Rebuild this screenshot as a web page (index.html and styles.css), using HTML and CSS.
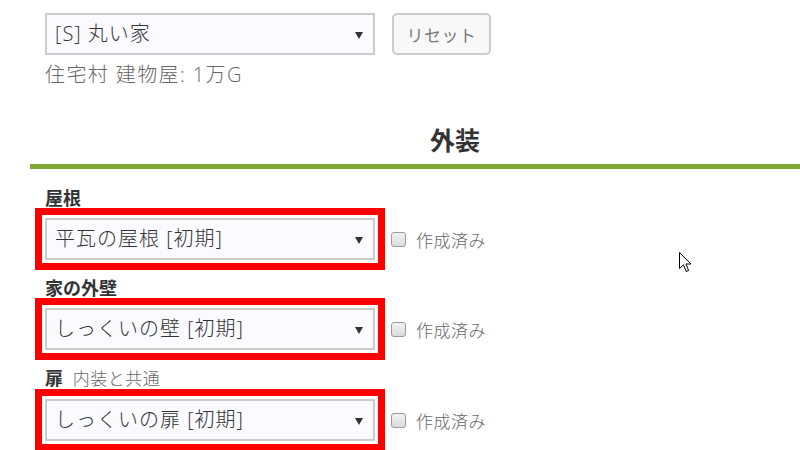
FILE: index.html
```html
<!DOCTYPE html>
<html lang="ja">
<head>
    <meta charset="UTF-8">
    <meta name="viewport" content="width=device-width, initial-scale=1.0">
    <title>家の設定</title>
    <link rel="stylesheet" href="styles.css">
</head>
<body>
    <div class="page">
        <div class="house-row">
            <div class="select">
                <span>[S] 丸い家</span>
                <i class="arrow"></i>
            </div>
            <button class="reset-btn" type="button">リセット</button>
        </div>
        <p class="house-info">住宅村 建物屋: 1万G</p>

        <h2 class="section-title">外装</h2>

        <div class="part">
            <div class="part-label"><b>屋根</b></div>
            <div class="part-row">
                <div class="select marked">
                    <span>平瓦の屋根 [初期]</span>
                    <i class="arrow"></i>
                </div>
                <label class="done"><span class="box"></span>作成済み</label>
            </div>
        </div>

        <div class="part">
            <div class="part-label"><b>家の外壁</b></div>
            <div class="part-row">
                <div class="select marked">
                    <span>しっくいの壁 [初期]</span>
                    <i class="arrow"></i>
                </div>
                <label class="done"><span class="box"></span>作成済み</label>
            </div>
        </div>

        <div class="part">
            <div class="part-label"><b>扉</b> <small>内装と共通</small></div>
            <div class="part-row">
                <div class="select marked">
                    <span>しっくいの扉 [初期]</span>
                    <i class="arrow"></i>
                </div>
                <label class="done"><span class="box"></span>作成済み</label>
            </div>
        </div>
    </div>

    <svg class="cursor" width="13" height="21" viewBox="0 0 13 21">
        <path d="M0.5 0.5 L0.5 16.5 L4.5 12.8 L7.2 19.5 L9.6 18.5 L7 12 L12 12 Z" fill="#fff" stroke="#000" stroke-width="1" stroke-linejoin="miter"/>
    </svg>
</body>
</html>
```

FILE: styles.css
```css
:root {
    --text-color: #333333;
    --muted: #666666;
    --border-color: #cccccc;
    --select-bg: #fafaff;
    --green: #80a834;
    --mark: #ff0000;
}

body {
    margin: 0;
    font-family: "Open Sans", "Noto Sans CJK JP", sans-serif;
    color: var(--text-color);
    background: #ffffff;
    overflow: hidden;
    width: 800px;
    height: 450px;
}

.page {
    width: 850px;
    margin-left: 30px;
    padding-top: 13px;
}

.house-row {
    display: flex;
    align-items: center;
    gap: 17px;
    padding-left: 15px;
}

.select {
    box-sizing: border-box;
    width: 330px;
    height: 42px;
    border: 2px solid var(--border-color);
    background-color: var(--select-bg);
    display: flex;
    align-items: center;
    justify-content: space-between;
    padding: 0 10px 0 8px;
    font-size: 20px;
    font-weight: 300;
    letter-spacing: 1px;
    line-height: 1;
    color: var(--text-color);
}

.arrow {
    width: 0;
    height: 0;
    border-left: 4px solid transparent;
    border-right: 4px solid transparent;
    border-top: 7px solid #333333;
    margin-top: 2px;
}

.reset-btn {
    box-sizing: border-box;
    width: 99px;
    height: 42px;
    border: 2px solid var(--border-color);
    border-radius: 5px;
    background: #f8f8f8;
    color: #7a7a7a;
    font-family: inherit;
    font-size: 17px;
    letter-spacing: 0.5px;
    padding: 0;
}

.house-info {
    margin: 8px 0 0 15px;
    font-size: 20px;
    font-weight: 300;
    letter-spacing: 1.4px;
    line-height: 24px;
    color: var(--muted);
}

.section-title {
    margin: 35px 0 17px;
    padding-bottom: 6px;
    border-bottom: 5px solid var(--green);
    text-align: center;
    font-size: 25px;
    line-height: 36px;
    font-weight: bold;
}

.part {
    padding-left: 15px;
    margin-bottom: 16px;
}

.part-label {
    font-size: 18px;
    line-height: 24px;
    margin-bottom: 8px;
}

.part-label small {
    font-size: 17px;
    font-weight: 300;
    letter-spacing: 0.5px;
    color: var(--muted);
    margin-left: 5px;
}

.part-row {
    display: flex;
    align-items: center;
    gap: 16px;
}

/* red highlight drawn over the screenshot */
.select.marked {
    outline: 7px solid var(--mark);
    outline-offset: 3px;
}

.done {
    display: flex;
    align-items: center;
    gap: 10px;
    font-size: 17px;
    font-weight: 300;
    letter-spacing: 0.5px;
    color: var(--muted);
}

.box {
    box-sizing: border-box;
    width: 15px;
    height: 15px;
    border: 1px solid #9a9a9a;
    border-radius: 3px;
    background: linear-gradient(#f2f2f2, #dcdcdc);
}

.cursor {
    position: absolute;
    left: 679px;
    top: 252px;
}
```
